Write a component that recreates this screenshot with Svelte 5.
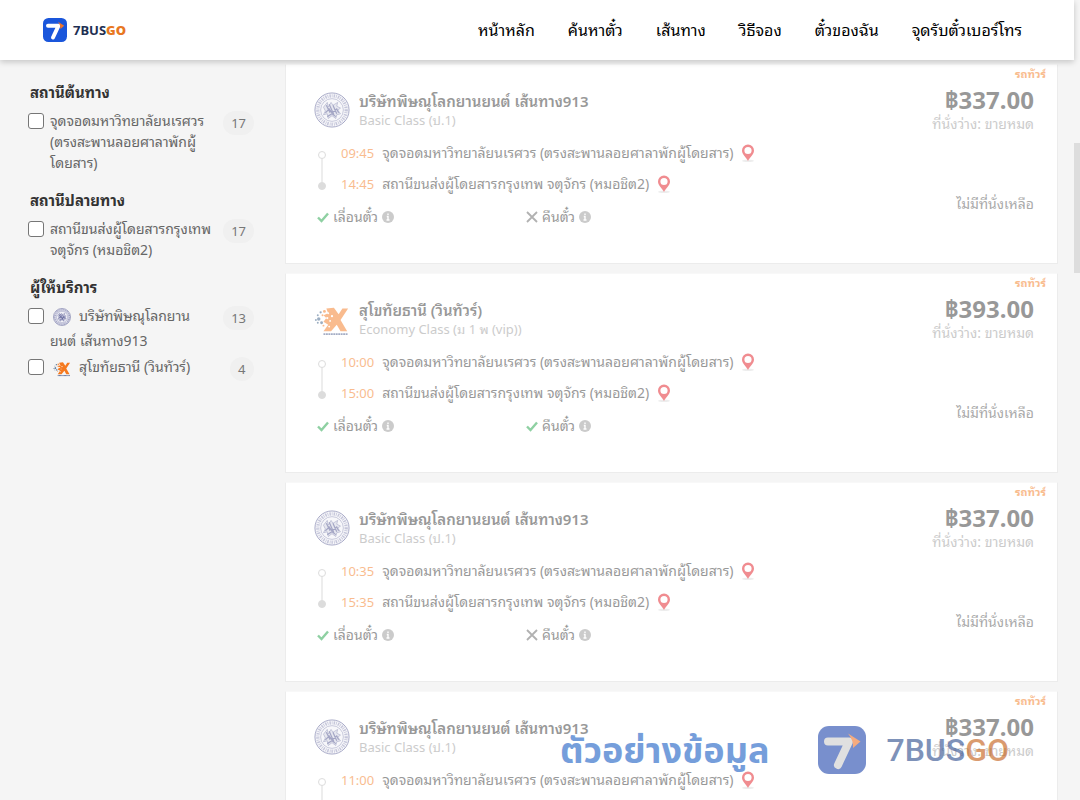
<script>
  const navLinks = ['หน้าหลัก', 'ค้นหาตั๋ว', 'เส้นทาง', 'วิธีจอง', 'ตั๋วของฉัน', 'จุดรับตั๋วเบอร์โทร'];

  const origin = 'จุดจอดมหาวิทยาลัยนเรศวร (ตรงสะพานลอยศาลาพักผู้โดยสาร)';
  const destination = 'สถานีขนส่งผู้โดยสารกรุงเทพ จตุจักร (หมอชิต2)';

  const filters = [
    { title: 'สถานีต้นทาง', options: [{ label: origin, count: 17 }] },
    { title: 'สถานีปลายทาง', options: [{ label: destination, count: 17 }] },
    {
      title: 'ผู้ให้บริการ',
      options: [
        { label: 'บริษัทพิษณุโลกยานยนต์ เส้นทาง913', count: 13, logo: 'seal' },
        { label: 'สุโขทัยธานี (วินทัวร์)', count: 4, logo: 'win' }
      ]
    }
  ];

  const seal = { logo: 'seal', name: 'บริษัทพิษณุโลกยานยนต์ เส้นทาง913', seat: 'Basic Class (ป.1)', price: '฿337.00', refund: false };
  const win = { logo: 'win', name: 'สุโขทัยธานี (วินทัวร์)', seat: 'Economy Class (ม 1 พ (vip))', price: '฿393.00', refund: true };

  const trips = [
    { ...seal, depart: '09:45', arrive: '14:45' },
    { ...win, depart: '10:00', arrive: '15:00' },
    { ...seal, depart: '10:35', arrive: '15:35' },
    { ...seal, depart: '11:00', arrive: '16:00' }
  ];
</script>

{#snippet brandMark(background, digit)}
  <svg class="brand-mark" viewBox="0 0 48 48" aria-hidden="true">
    <rect width="48" height="48" rx="11" fill={background} />
    <path d="M10 15.500h21L20 39" fill="none" stroke={digit} stroke-width="8" stroke-linecap="round" stroke-linejoin="round" />
    <path d="M30 7.500l12.500 8-7.500 6.500q1-7-5-14.500z" fill="#f0742a" />
  </svg>
{/snippet}

{#snippet companyLogo(kind)}
  {#if kind === 'seal'}
    <svg class="company-logo" viewBox="0 0 38 38" aria-hidden="true">
      <g fill="none" stroke="#4b4f8c">
        <circle cx="19" cy="19" r="18" fill="#f1f1f7" stroke-width="1" />
        <circle cx="19" cy="19" r="15" stroke-width="3.500" stroke-dasharray="1.500 1 0.800 1.200" opacity="0.6" />
        <circle cx="19" cy="19" r="12" stroke-width="0.600" />
        <path d="M10 16l4-5 1 5 3-5 2 3 5-3-1 4 4 2-3 2 3 4-4 1-1 4-4-3-4 3-1-5-4 1 2-4z" fill="#4b4f8c" fill-opacity="0.200" stroke-width="0.600" />
        <path d="M13 14l4 8M16 13l5 11M20 14l4 9M12 22l4-4 3 4 5-4 2 4M14 26l5-3 4 3" stroke-width="1.300" />
      </g>
    </svg>
  {:else}
    <svg class="company-logo" viewBox="0 0 38 38" aria-hidden="true">
      <path d="M13 8l8-1 5 7 4-6h6l-8 12 7 12h-7l-4-7-6 7h-8l5-7-5-3 3-4-3-3 5-2z" fill="#f5791f" />
      <g fill="#f5791f"><circle cx="11" cy="11" r="1.500" /><circle cx="9" cy="15" r="1" /><circle cx="10" cy="26" r="1" /></g>
      <g fill="#fff">
        <circle cx="15" cy="13" r="1" /><circle cx="19" cy="16" r="1.200" /><circle cx="14" cy="18" r="1.200" />
        <circle cx="17" cy="21" r="1" /><circle cx="16" cy="27" r="1" />
      </g>
      <g fill="#3b5f86">
        <circle cx="7" cy="12" r="1.200" /><circle cx="4" cy="15" r="1" /><circle cx="5" cy="19" r="1.800" />
        <circle cx="2" cy="20" r="1" /><circle cx="8" cy="23" r="1.500" /><circle cx="4" cy="23" r="1" />
      </g>
      <path d="M10 35h26" stroke="#4b5d8c" stroke-width="2" stroke-dasharray="2 0.600" />
    </svg>
  {/if}
{/snippet}

{#snippet infoIcon()}
  <svg class="info" viewBox="0 0 12 12" aria-hidden="true">
    <circle cx="6" cy="6" r="6" fill="#999" />
    <path d="M6 2.500v1.500M4.800 5.500H6v3M4.500 9h3" fill="none" stroke="#fff" stroke-width="1.400" />
  </svg>
{/snippet}

{#snippet pin()}
  <svg class="pin" viewBox="0 0 14 18" aria-hidden="true">
    <ellipse cx="7" cy="16.800" rx="6" ry="1.200" fill="#ddd" />
    <path d="M7 0.500a6 6 0 0 0-6 6C1 10.500 5 13 7 17 9 13 13 10.500 13 6.500a6 6 0 0 0-6-6zm0 2.400a3.600 3.600 0 1 1 0 7.200 3.600 3.600 0 0 1 0-7.200z" fill="#e31b23" fill-rule="evenodd" />
  </svg>
{/snippet}

{#snippet policy(label, allowed)}
  <span class="policy">
    {#if allowed}
      <svg class="mark" viewBox="0 0 12 12" aria-hidden="true"><path d="M1 6.500l3.500 3.500L11 2.500" fill="none" stroke="#20a347" stroke-width="2.400" /></svg>
    {:else}
      <svg class="mark" viewBox="0 0 12 12" aria-hidden="true"><path d="M1 1l10 10M11 1L1 11" fill="none" stroke="#666" stroke-width="1.800" /></svg>
    {/if}
    {label}
    {@render infoIcon()}
  </span>
{/snippet}

<div class="page">
  <header>
    <a class="brand" href="/">
      {@render brandMark('#1a56db', '#fff')}
      <span>7BUS<b>GO</b></span>
    </a>
    <nav>
      {#each navLinks as link}
        <a href="/">{link}</a>
      {/each}
    </nav>
  </header>

  <main>
    <aside>
      {#each filters as group}
        <section class="filter">
          <h2>{group.title}</h2>
          {#each group.options as option}
            <div class="option">
              <label class:with-logo={option.logo}>
                <input type="checkbox" />
                <span>{#if option.logo}{@render companyLogo(option.logo)}{/if}{option.label}</span>
              </label>
              <span class="count">{option.count}</span>
            </div>
          {/each}
        </section>
      {/each}
    </aside>

    <div class="trips">
      {#each trips as trip}
        <article>
          <div class="trip">
            <div class="company">
              {@render companyLogo(trip.logo)}
              <div>
                <h3>{trip.name}</h3>
                <p>{trip.seat}</p>
              </div>
            </div>
            <ol class="stops">
              <li><time>{trip.depart}</time><span>{origin}</span>{@render pin()}</li>
              <li><time>{trip.arrive}</time><span>{destination}</span>{@render pin()}</li>
            </ol>
            <div class="policies">
              {@render policy('เลื่อนตั๋ว', true)}
              {@render policy('คืนตั๋ว', trip.refund)}
            </div>
          </div>
          <div class="fare">
            <span class="type">รถทัวร์</span>
            <strong>{trip.price}</strong>
            <span class="seats">ที่นั่งว่าง: ขายหมด</span>
            <span class="sold-out">ไม่มีที่นั่งเหลือ</span>
          </div>
        </article>
      {/each}
    </div>
  </main>

  <div class="watermark">
    <span class="sample">ตัวอย่างข้อมูล</span>
    {@render brandMark('#1f46ac', '#ccc')}
    <span class="name">7BUS<b>GO</b></span>
  </div>
  <div class="scrollbar"></div>
</div>

<style>
  :global(body) {
    background: #f5f5f5;
  }

  .page {
    position: relative;
    height: 100vh;
    overflow: hidden;
    font-family: 'Noto Sans', 'Noto Sans Thai Looped', 'Loma', 'Noto Sans Thai', sans-serif;
    font-size: 14px;
    line-height: 20px;
    color: #333;
  }

  h2,
  h3,
  p,
  ol {
    margin: 0;
    padding: 0;
  }

  /* Header */
  header {
    position: relative;
    z-index: 1;
    display: flex;
    align-items: center;
    justify-content: space-between;
    height: 60px;
    margin-right: 6px;
    padding: 0 52px 0 43px;
    box-sizing: border-box;
    background: #fff;
    box-shadow: 0 2px 6px rgba(0, 0, 0, 0.2);
  }

  .brand {
    display: flex;
    align-items: center;
    gap: 6px;
    font-size: 13px;
    font-weight: 700;
    color: #1e2f52;
    text-decoration: none;
  }

  .brand .brand-mark {
    width: 24px;
    height: 24px;
  }

  .brand b {
    color: #e87722;
  }

  nav {
    display: flex;
    gap: 33px;
  }

  nav a {
    font-size: 16px;
    color: #000;
    text-decoration: none;
  }

  main {
    display: flex;
    gap: 31px;
    padding: 4px 22px 0 30px;
  }

  /* Filters */
  aside {
    flex: 0 0 224px;
    padding-top: 18px;
  }

  .filter {
    margin-bottom: 17px;
  }

  h2 {
    margin-bottom: 8px;
    font-size: 15px;
    line-height: 20px;
    font-weight: 700;
  }

  .option {
    display: flex;
    align-items: flex-start;
    justify-content: space-between;
  }

  .option label {
    display: flex;
    gap: 6px;
    width: 186px;
    line-height: 21px;
    color: #666;
  }

  .option .with-logo {
    width: 178px;
    margin-bottom: 3px;
    line-height: 25px;
  }

  .option input {
    flex: none;
    width: 16px;
    height: 16px;
    margin: 3px 0 0 -2px;
    appearance: none;
    background: #fff;
    border: 1px solid #767676;
    border-radius: 3px;
  }

  .with-logo span {
    margin-top: -2px;
  }

  .option .company-logo {
    width: 18px;
    height: 18px;
    margin: 0 8px 0 3px;
    vertical-align: middle;
  }

  .count {
    min-width: 24px;
    margin-top: 1px;
    padding: 2px 8px;
    box-sizing: border-box;
    border-radius: 13px;
    background: #f0f0f0;
    font-size: 13px;
    line-height: 20px;
    color: #777;
  }

  /* Trip cards */
  .trips {
    display: flex;
    flex: 1;
    flex-direction: column;
    gap: 9px;
    min-width: 0;
  }

  article {
    display: flex;
    justify-content: space-between;
    min-height: 198px;
    background: #fff;
    border: 1px solid #ececec;
    border-top-color: #f8f8f8;
  }

  .trip,
  .fare {
    opacity: 0.5;
  }

  .trip {
    padding: 26px 0 0 28px;
  }

  .company {
    display: flex;
    align-items: center;
    gap: 9px;
  }

  .company .company-logo {
    width: 36px;
    height: 38px;
  }

  h3 {
    font-size: 15px;
    line-height: 20px;
    font-weight: 600;
  }

  .company p {
    font-size: 13px;
    line-height: 18px;
    color: #999;
  }

  .stops {
    position: relative;
    margin-top: 8px;
    list-style: none;
  }

  .stops::before {
    content: '';
    position: absolute;
    top: 18px;
    bottom: 15px;
    left: 7px;
    border-left: 2px solid #ddd;
  }

  .stops li {
    position: relative;
    display: flex;
    align-items: center;
    height: 31px;
    padding-left: 27px;
    gap: 8px;
  }

  .stops li::before {
    content: '';
    position: absolute;
    top: 14px;
    left: 4px;
    width: 6px;
    height: 6px;
    background: #fff;
    border: 1px solid #bbb;
    border-radius: 50%;
  }

  .stops li:last-child::before {
    background: #bbb;
  }

  time {
    font-size: 13px;
    color: #f47b20;
  }

  .pin {
    width: 14px;
    height: 18px;
  }

  .policies {
    display: grid;
    grid-template-columns: 209px 209px;
    margin-top: 6px;
    padding-left: 3px;
  }

  .policy {
    display: flex;
    align-items: center;
    gap: 4px;
    line-height: 24px;
  }

  .mark,
  .info {
    width: 12px;
    height: 12px;
  }

  .fare {
    display: flex;
    flex-direction: column;
    align-items: flex-end;
    padding-right: 23px;
  }

  .type {
    margin-right: -12px;
    font-size: 11px;
    line-height: 18px;
    font-weight: 700;
    color: #f47b20;
  }

  .fare strong {
    margin-top: 3px;
    font-size: 24px;
    line-height: 28px;
  }

  .seats {
    color: #999;
  }

  .sold-out {
    margin-top: 60px;
    color: #555;
  }

  /* Sample data mark over the page */
  .watermark {
    position: absolute;
    z-index: 2;
    right: 71px;
    bottom: 20px;
    display: flex;
    align-items: center;
    opacity: 0.6;
    line-height: 60px;
    font-weight: 600;
    color: #2a4a8c;
  }

  .watermark .sample {
    margin-right: 49px;
    font-family: 'Noto Sans', 'Noto Sans Thai', sans-serif;
    font-size: 36px;
    font-weight: 700;
    color: #1a5fc4;
  }

  .watermark .brand-mark {
    width: 48px;
    height: 48px;
    margin-right: 20px;
  }

  .watermark .name {
    font-family: Roboto, sans-serif;
    font-size: 32px;
    font-weight: 500;
  }

  .watermark b {
    font-weight: 500;
    color: #c25a10;
  }

  .scrollbar {
    position: absolute;
    top: 143px;
    right: 0;
    width: 6px;
    height: 130px;
    background: #ddd;
  }
</style>
